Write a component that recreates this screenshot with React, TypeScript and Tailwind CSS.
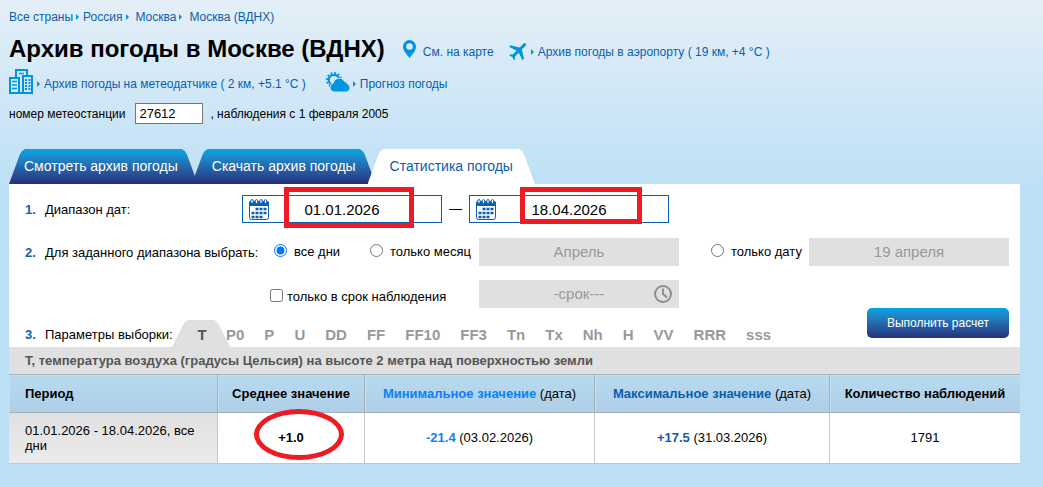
import { useState } from "react";
import clsx from "clsx";
import { MdFlight } from "react-icons/md";

const params = ["P0", "P", "U", "DD", "FF", "FF10", "FF3", "Tn", "Tx", "Nh", "H", "VV", "RRR", "sss"];

const modes = [
  { value: "all", label: "все дни", width: "w-24" },
  { value: "month", label: "только месяц", width: "w-[109px]" },
];

const tabShape =
  "[clip-path:polygon(0_100%,11px_5px,13px_2px,16px_0,calc(100%_-_16px)_0,calc(100%_-_13px)_2px,calc(100%_-_11px)_5px,100%_100%)]";

function Arrow() {
  return (
    <svg viewBox="0 0 3 6" className="h-1.5 w-[3px] shrink-0 fill-[#0095e0]">
      <path d="M0 0 3 3 0 6Z" />
    </svg>
  );
}

function PinIcon() {
  return (
    <svg viewBox="0 0 13 18" className="h-[18px] w-[13px] shrink-0 fill-[#0095e0]">
      <path
        fillRule="evenodd"
        d="M6.5 0A6.5 6.5 0 0 0 0 6.5C0 11 3.500 14 6.5 18 9.500 14 13 11 13 6.5A6.5 6.5 0 0 0 6.5 0Zm0 3.200a3.300 3.300 0 1 1 0 6.600 3.300 3.300 0 0 1 0-6.600Z"
      />
    </svg>
  );
}

function CityIcon() {
  return (
    <svg viewBox="0 0 24 25" className="h-[25px] w-6 shrink-0" fill="none" stroke="#0095e0" strokeWidth="2">
      <path d="M1 9H10V24H1ZM14 7H23V24H14ZM7 9V1H18V7M10 24H14" />
      <path d="M10 4.500H15M3 12.500H8M3 16H8M3 19.500H8" strokeWidth="1.500" />
      <path d="M17 10V21M20.500 10V21" strokeWidth="2" strokeDasharray="2 1" />
    </svg>
  );
}

function SunCloudIcon() {
  return (
    <svg viewBox="0 0 24 20" className="h-5 w-6 shrink-0" fill="#0095e0">
      <circle cx="8" cy="8" r="7" fill="none" stroke="#0095e0" strokeWidth="2" strokeDasharray="1.800 1.860" />
      <circle cx="8" cy="8" r="5.200" fill="none" stroke="#0095e0" strokeWidth="2.200" />
      <path
        d="M8 20a4.500 4.500 0 0 1-.8-8.800A6 6 0 0 1 18.500 9.500 4 4 0 0 1 21.500 12 4.200 4.200 0 0 1 20.500 20Z"
        stroke="#d2e6f6"
        strokeWidth="1"
      />
    </svg>
  );
}

function CalendarIcon() {
  return (
    <svg viewBox="0 0 20 21" className="pointer-events-none absolute top-1 left-[7px] h-[21px] w-5" fill="none">
      <rect x="0.500" y="2.500" width="19" height="18" rx="2" fill="#fff" stroke="#0a5eb0" />
      <path d="M0 7V4a2 2 0 0 1 2-2h16a2 2 0 0 1 2 2v3Z" fill="#0a5eb0" />
      {[3, 7.5, 12, 16.5].map((x) => (
        <ellipse key={x} cx={x} cy="2.500" rx="1.300" ry="2" stroke="#0a5eb0" fill="#fff" />
      ))}
      <path d="M6.500 10H18M2.500 14H18M2.500 18H14" stroke="#0a5eb0" strokeWidth="2.500" strokeDasharray="3 1" />
    </svg>
  );
}

function ClockIcon() {
  return (
    <svg viewBox="0 0 18 18" className="pointer-events-none absolute top-[5px] right-[7px] h-[18px] w-[18px]" fill="none" stroke="#8e8e8e" strokeWidth="2">
      <circle cx="9" cy="9" r="8" />
      <path d="M9 3.500V9l4 3.500" />
    </svg>
  );
}

function DateField({ label, value, mark }: { label: string; value: string; mark: string }) {
  return (
    <div className="relative w-[200px]">
      <input
        type="text"
        aria-label={label}
        defaultValue={value}
        className="block h-7 w-full border border-[#0a5eb0] bg-white text-center text-[15px] text-black"
      />
      <CalendarIcon />
      <div className={clsx("pointer-events-none absolute -top-2 border-5 border-[#ed1c24]", mark)} />
    </div>
  );
}

function GraySelect({ label, value }: { label: string; value: string }) {
  return (
    <select
      disabled
      aria-label={label}
      className="block h-7 w-[200px] appearance-none bg-[#e0e0e0] text-center text-[15px] text-[#999] opacity-100"
    >
      <option>{value}</option>
    </select>
  );
}

function Step({ n, children }: { n: number; children: React.ReactNode }) {
  return (
    <span className="flex whitespace-nowrap">
      <b className="w-5 shrink-0 text-[#1a5fab]">{n}.</b>
      {children}
    </span>
  );
}

function Radio({ value, label, mode, onChange }: { value: string; label: string; mode: string; onChange: (v: string) => void }) {
  return (
    <label className="flex items-center gap-[7px] whitespace-nowrap">
      <input
        type="radio"
        name="mode"
        checked={mode === value}
        onChange={() => onChange(value)}
        className="mb-1 h-[13px] w-[13px]"
      />
      {label}
    </label>
  );
}

export default function App() {
  const [mode, setMode] = useState("all");

  return (
    <div className="min-h-screen bg-[#bbdff5] bg-[linear-gradient(#e4eff8,#bbdff5_200px)] pr-[23px] pb-6 pl-[9px] font-['Liberation_Sans',Arial,sans-serif] text-[13px] leading-4 text-black">
      <header className="text-xs leading-4">
        <nav className="flex items-center pt-[9px] text-[#0a5eb0]">
          <a href="#" className="mr-[3px]">Все страны</a>
          <Arrow />
          <a href="#" className="mr-1 ml-1">Россия</a>
          <Arrow />
          <a href="#" className="mr-[3px] ml-1.5">Москва</a>
          <Arrow />
          <a href="#" className="ml-[7px]">Москва (ВДНХ)</a>
        </nav>

        <div className="mt-2 flex h-8 items-center text-[#0a5eb0]">
          <h1 className="mr-[18px] text-2xl font-bold text-black">Архив погоды в Москве (ВДНХ)</h1>
          <PinIcon />
          <a href="#" className="mt-1.5 mr-[13px] ml-[7px]">См. на карте</a>
          <MdFlight className="mt-1 h-6 w-6 rotate-45 text-[#0095e0]" />
          <span className="mt-1.5 flex items-center gap-1">
            <Arrow />
            <a href="#">Архив погоды в аэропорту ( 19 км, +4 °C )</a>
          </span>
        </div>

        <div className="mt-1 flex items-center text-[#0a5eb0]">
          <CityIcon />
          <a href="#" className="ml-1 flex items-center gap-1 pt-1">
            <Arrow />
            Архив погоды на метеодатчике ( 2 км, +5.1 °C )
          </a>
          <span className="ml-5">
            <SunCloudIcon />
          </span>
          <a href="#" className="ml-[3px] flex items-center gap-1 pt-1">
            <Arrow />
            Прогноз погоды
          </a>
        </div>

        <div className="mt-[9px] flex items-center">
          <label htmlFor="station">номер метеостанции</label>
          <input
            id="station"
            defaultValue="27612"
            className="mr-[7px] ml-2.5 h-[21px] w-[68px] border border-[#767676] bg-white px-[3px] text-[13px]"
          />
          , наблюдения с 1 февраля 2005
        </div>
      </header>

      <nav className="mt-[25px] flex text-sm leading-[35px] whitespace-nowrap">
        <a href="#" className={clsx("bg-linear-to-b from-[#00a5e3] to-[#24317b] pr-5 pl-[15px] text-white", tabShape)}>
          Смотреть архив погоды
        </a>
        <a href="#" className={clsx("-ml-1.5 bg-linear-to-b from-[#00a5e3] to-[#24317b] px-5 text-white", tabShape)}>
          Скачать архив погоды
        </a>
        <a href="#" className={clsx("-ml-2 bg-white px-[22px] text-[#0a5eb0]", tabShape)}>
          Статистика погоды
        </a>
      </nav>

      <main className="bg-white">
        <form className="pt-[11px] pr-[11px] pl-4" onSubmit={(e) => e.preventDefault()}>
          <div className="flex items-center">
            <div className="w-[217px] pt-0.5">
              <Step n={1}>Диапазон дат:</Step>
            </div>
            <DateField label="Начало диапазона" value="01.01.2026" mark="left-[42px] h-[41px] w-[130px]" />
            <span className="w-[27px] text-center">—</span>
            <DateField label="Конец диапазона" value="18.04.2026" mark="left-[51px] h-[37px] w-[122px]" />
          </div>

          <div className="mt-[15px] flex items-center">
            <div className="w-[249px] pt-0.5">
              <Step n={2}>Для заданного диапазона выбрать:</Step>
            </div>
            {modes.map((m) => (
              <div key={m.value} className={m.width}>
                <Radio value={m.value} label={m.label} mode={mode} onChange={setMode} />
              </div>
            ))}
            <GraySelect label="Месяц" value="Апрель" />
            <div className="ml-auto w-[98px]">
              <Radio value="date" label="только дату" mode={mode} onChange={setMode} />
            </div>
            <GraySelect label="Дата" value="19 апреля" />
          </div>

          <div className="mt-3.5 flex items-center pl-[245px]">
            <label className="flex w-[209px] items-center gap-1 pt-1.5 whitespace-nowrap">
              <input type="checkbox" className="mb-1 h-[13px] w-[13px]" />
              только в срок наблюдения
            </label>
            <div className="relative">
              <GraySelect label="Срок" value="-срок---" />
              <ClockIcon />
            </div>
          </div>

          <div className="flex h-[39px] items-end">
            <div className="w-[147px] pb-1">
              <Step n={3}>Параметры выборки:</Step>
            </div>
            <div className="flex gap-5 text-[15px] leading-[25px] font-bold text-[#999]">
              <button type="button" className={clsx("-mr-6 w-[58px] bg-[#e0e0e0] pt-0.5 pl-0.5 text-[#555]", tabShape)}>
                T
              </button>
              {params.map((p) => (
                <button key={p} type="button" className="relative pt-0.5">
                  {p}
                </button>
              ))}
            </div>
            <button
              type="submit"
              className="ml-auto h-[30px] w-[142px] self-start rounded-[5px] bg-linear-to-b from-[#00a5e3] to-[#24317b] text-xs text-white"
            >
              Выполнить расчет
            </button>
          </div>
        </form>

        <h2 className="bg-[#e0e0e0] py-[5px] pl-4 leading-[17px] font-bold text-[#555]">
          T, температура воздуха (градусы Цельсия) на высоте 2 метра над поверхностью земли
        </h2>

        <table className="w-full table-fixed border-separate border-spacing-0 text-center">
          <colgroup>
            <col className="w-[209px]" />
            <col className="w-[147px]" />
            <col className="w-[230px]" />
            <col className="w-[235px]" />
            <col />
          </colgroup>
          <thead>
            <tr className="h-[39px] *:border-y *:border-r *:border-[#a3b1bb] *:bg-linear-to-b *:from-[#b8daf0] *:to-[#afcee7] *:inset-shadow-[1px_1px_#c3e1f5] *:last:border-r-0">
              <th className="pl-4 text-left">Период</th>
              <th>Среднее значение</th>
              <th className="font-normal">
                <b className="text-[#0a80ff]">Минимальное значение</b> (дата)
              </th>
              <th className="font-normal">
                <b className="text-[#0a5eb0]">Максимальное значение</b> (дата)
              </th>
              <th>Количество наблюдений</th>
            </tr>
          </thead>
          <tbody>
            <tr className="h-[51px] *:border-r *:border-b *:border-[#c6c6c6] *:last:border-r-0">
              <td className="bg-linear-to-b from-[#e0e0e0] to-[#ebebeb] pr-4 pl-4 text-left leading-[15px]">
                01.01.2026 - 18.04.2026, все дни
              </td>
              <td className="relative font-bold">
                +1.0
                <div className="pointer-events-none absolute -top-1 left-9 h-[51px] w-[90px] rounded-[50%] border-5 border-[#ed1c24]" />
              </td>
              <td>
                <b className="text-[#0a80ff]">-21.4</b> (03.02.2026)
              </td>
              <td>
                <b className="text-[#0a5eb0]">+17.5</b> (31.03.2026)
              </td>
              <td>1791</td>
            </tr>
          </tbody>
        </table>
      </main>
    </div>
  );
}
